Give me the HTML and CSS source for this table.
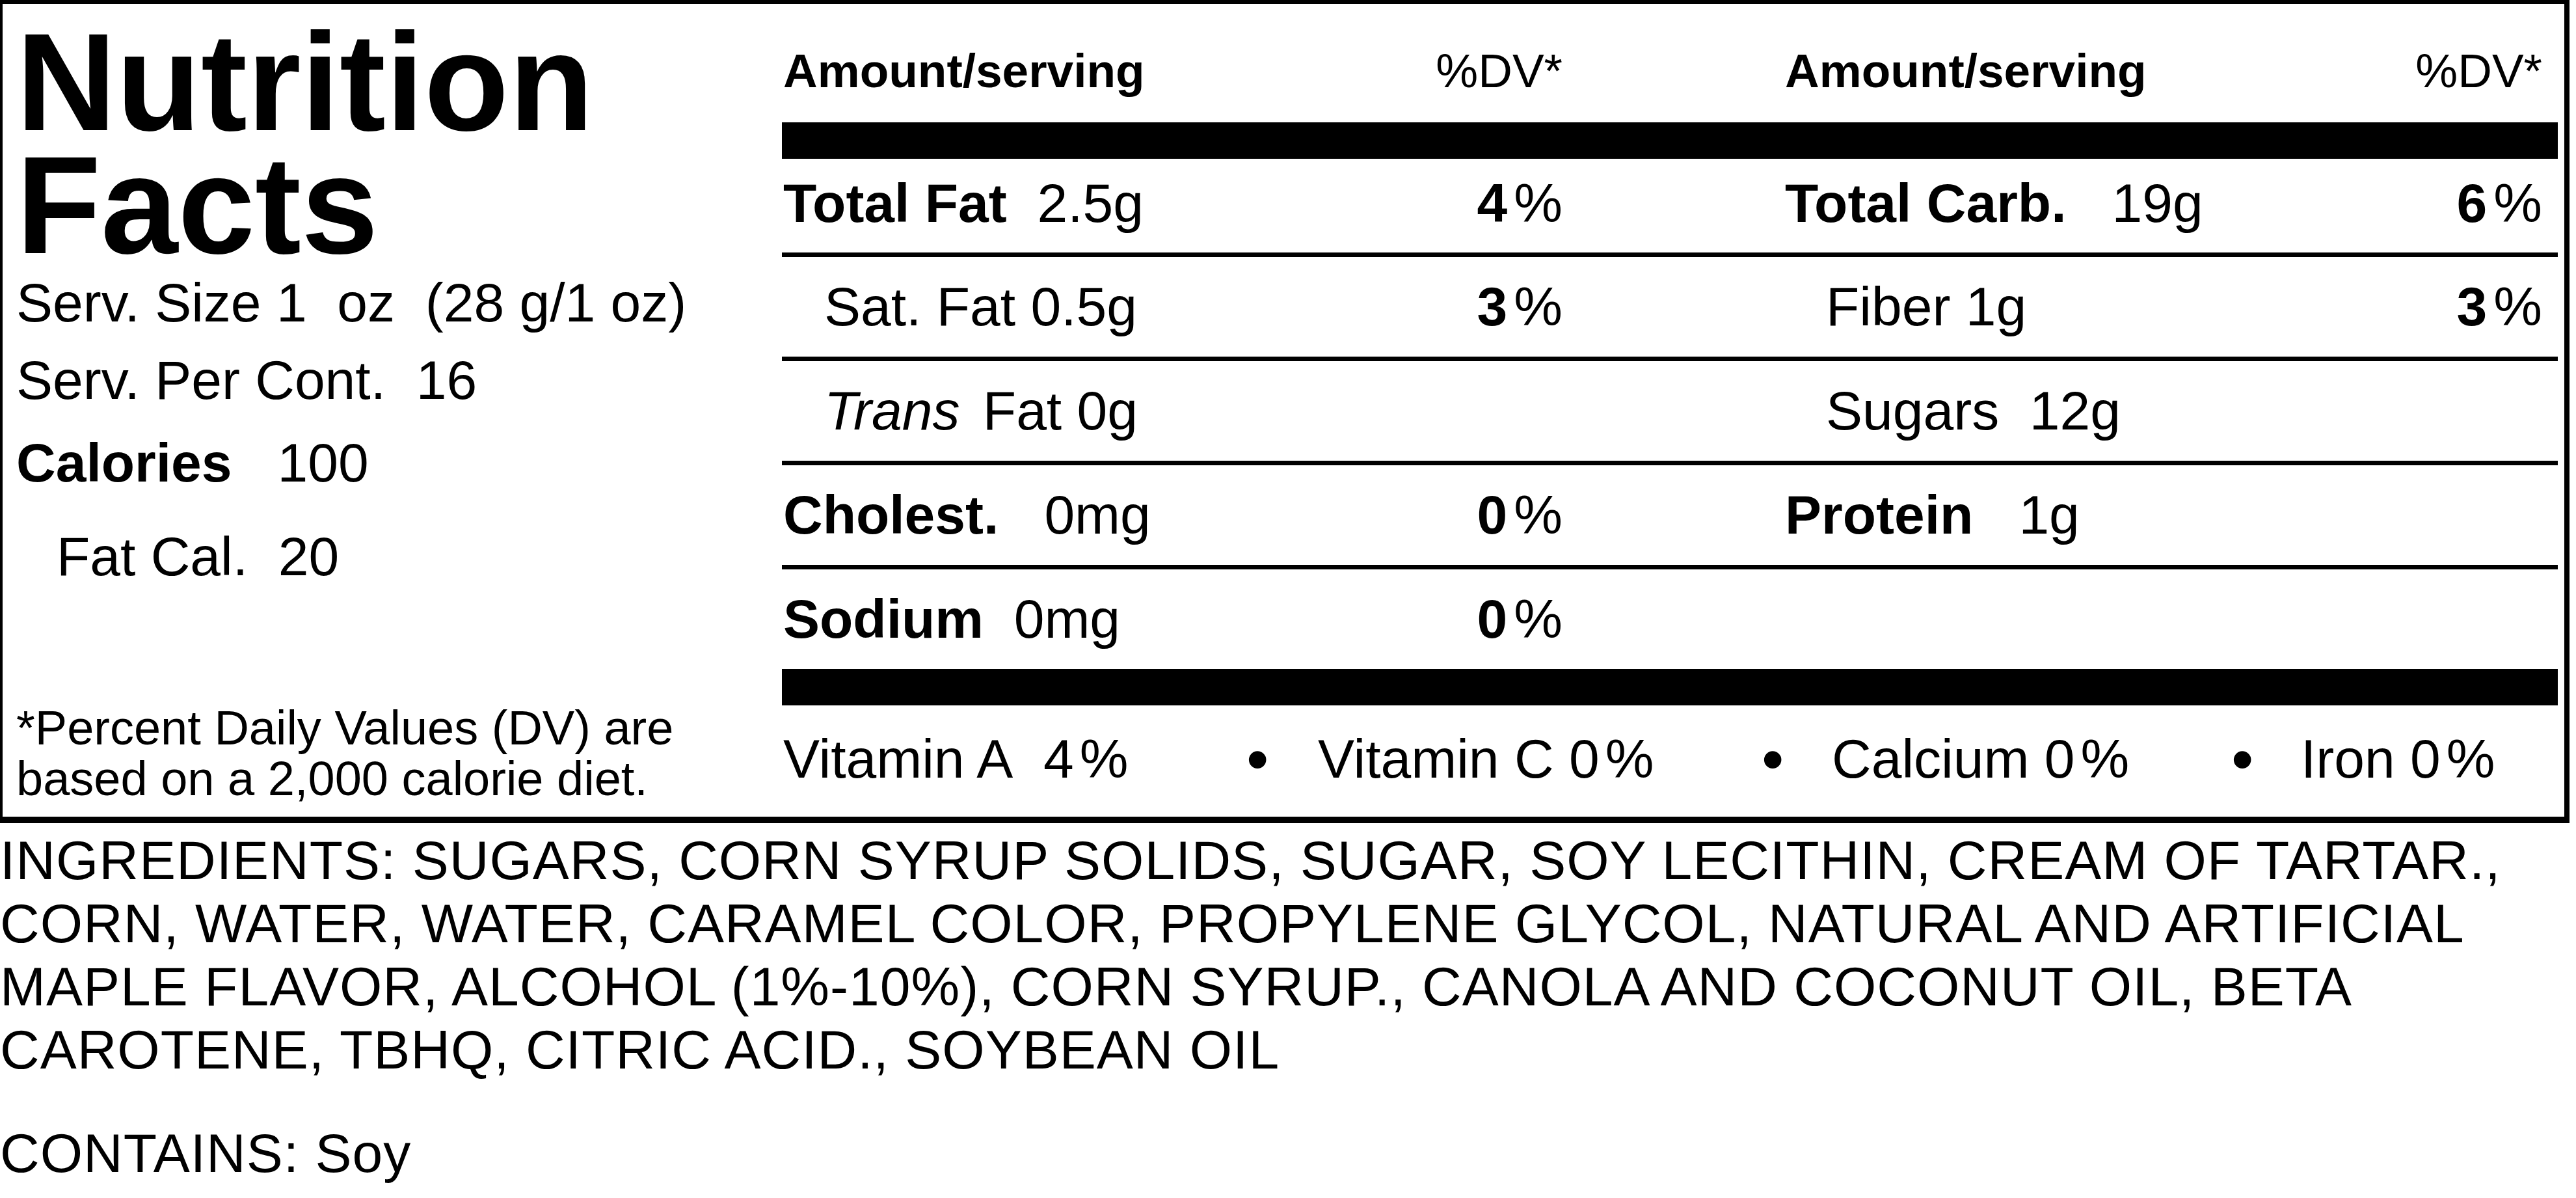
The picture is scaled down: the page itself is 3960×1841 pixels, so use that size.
FILE: index.html
```html
<!DOCTYPE html>
<html lang="en">
<head>
<meta charset="utf-8">
<title>Nutrition Facts</title>
<link rel="stylesheet" href="styles.css">
</head>
<body>
<section class="label">
  <div class="summary">
    <h1 class="title"><span class="title-line">Nutrition</span><span class="title-line">Facts</span></h1>
    <p class="line serv-size">Serv. Size 1&nbsp; oz&nbsp; (28 g/1 oz)</p>
    <p class="line serv-per">Serv. Per Cont.&nbsp; 16</p>
    <p class="line calories"><b>Calories</b>&nbsp;&nbsp; 100</p>
    <p class="line fat-cal">Fat Cal.&nbsp; 20</p>
    <p class="footnote">*Percent Daily Values (DV) are<br>based on a 2,000 calorie diet.</p>
  </div>
  <div class="facts">
    <div class="row head">
      <div class="cell"><b>Amount/serving</b><span>%DV*</span></div>
      <div class="cell"><b>Amount/serving</b><span>%DV*</span></div>
    </div>
    <div class="bar"></div>
    <div class="row item first">
      <div class="cell"><span><b>Total Fat</b>&nbsp; 2.5g</span><span><b>4</b><span class="pc">%</span></span></div>
      <div class="cell"><span><b>Total Carb.</b>&nbsp;&nbsp; 19g</span><span><b>6</b><span class="pc">%</span></span></div>
    </div>
    <div class="row item">
      <div class="cell sub"><span>Sat. Fat 0.5g</span><span><b>3</b><span class="pc">%</span></span></div>
      <div class="cell sub"><span>Fiber 1g</span><span><b>3</b><span class="pc">%</span></span></div>
    </div>
    <div class="row item">
      <div class="cell sub"><span><i class="trans">Trans</i> Fat 0g</span></div>
      <div class="cell sub"><span>Sugars&nbsp; 12g</span></div>
    </div>
    <div class="row item">
      <div class="cell"><span><b>Cholest.</b>&nbsp;&nbsp; 0mg</span><span><b>0</b><span class="pc">%</span></span></div>
      <div class="cell"><span><b>Protein</b>&nbsp;&nbsp; 1g</span></div>
    </div>
    <div class="row item last">
      <div class="cell"><span><b>Sodium</b>&nbsp; 0mg</span><span><b>0</b><span class="pc">%</span></span></div>
      <div class="cell"></div>
    </div>
    <div class="bar"></div>
    <div class="vitamins">
      <span>Vitamin A&nbsp; 4<span class="pc pc-sm">%</span></span>
      <span class="dot">•</span>
      <span>Vitamin C 0<span class="pc pc-sm">%</span></span>
      <span class="dot">•</span>
      <span>Calcium 0<span class="pc pc-sm">%</span></span>
      <span class="dot">•</span>
      <span>Iron 0<span class="pc pc-sm">%</span></span>
    </div>
  </div>
</section>
<section class="ingredients">
  <p>INGREDIENTS: SUGARS, CORN SYRUP SOLIDS, SUGAR, SOY LECITHIN, CREAM OF TARTAR.,<br>CORN, WATER, WATER, CARAMEL COLOR, PROPYLENE GLYCOL, NATURAL AND ARTIFICIAL<br>MAPLE FLAVOR, ALCOHOL (1%-10%), CORN SYRUP., CANOLA AND COCONUT OIL, BETA<br>CAROTENE, TBHQ, CITRIC ACID., SOYBEAN OIL</p>
  <p class="contains">CONTAINS: Soy</p>
</section>
</body>
</html>
```
FILE: styles.css
```css
* {
  box-sizing: border-box;
}

html, body {
  margin: 0;
  padding: 0;
  background: #ffffff;
}

body {
  font-family: "Liberation Sans", Arial, sans-serif;
  color: #000000;
  width: 3960px;
}

b {
  font-weight: 700;
}

p, h1 {
  margin: 0;
}

.label {
  display: flex;
  width: 3950px;
  border-style: solid;
  border-color: #000000;
  border-width: 6px 8px 10px 4px;
}

/* Left summary column */
.summary {
  flex: none;
  width: 1198px;
  display: flex;
  flex-direction: column;
  padding-left: 21px;
}

.title {
  font-size: 213px;
  font-weight: 700;
  line-height: 189px;
  padding-top: 26px;
}

.title-line {
  display: block;
  height: 189px;
}

.line {
  font-size: 84px;
  line-height: 100px;
  white-space: nowrap;
}

.serv-size { margin-top: 5px; }
.serv-per { margin-top: 19px; }
.calories { margin-top: 27px; }
.fat-cal { margin-top: 44px; padding-left: 62px; }

.footnote {
  margin-top: auto;
  padding-bottom: 19px;
  font-size: 74px;
  line-height: 78px;
}

/* Right facts table */
.facts {
  flex: 1;
  margin-right: 10px;
  display: flex;
  flex-direction: column;
}

.row {
  display: grid;
  grid-template-columns: 1198px 1164px;
  column-gap: 342px;
  padding-left: 2px;
}

.cell {
  display: flex;
  justify-content: space-between;
  white-space: nowrap;
}

.cell.sub {
  padding-left: 63px;
}

.trans {
  margin-right: 12px;
}

.head {
  font-size: 73px;
  line-height: 82px;
  padding-top: 62px;
  padding-bottom: 38px;
}

.bar {
  height: 56px;
  background: #000000;
}

.item {
  font-size: 84px;
  line-height: 153px;
  border-bottom: 7px solid #000000;
}

.item.first {
  line-height: 137px;
  padding-bottom: 7px;
}

.item.last {
  border-bottom: none;
}

.pc {
  margin-left: 10px;
}

.pc-sm {
  margin-left: 9px;
}

.vitamins {
  display: grid;
  grid-template-columns: 715px 107px 685px 105px 617px 104px auto;
  font-size: 84px;
  line-height: 165px;
  padding: 0 0 6px 2px;
  white-space: nowrap;
}

.dot {
  font-size: 98px;
  margin-left: -3px;
}

/* Ingredients */
.ingredients {
  font-size: 84px;
  line-height: 97px;
  letter-spacing: 1px;
  padding-top: 9px;
}

.contains {
  margin-top: 62px;
}
```
